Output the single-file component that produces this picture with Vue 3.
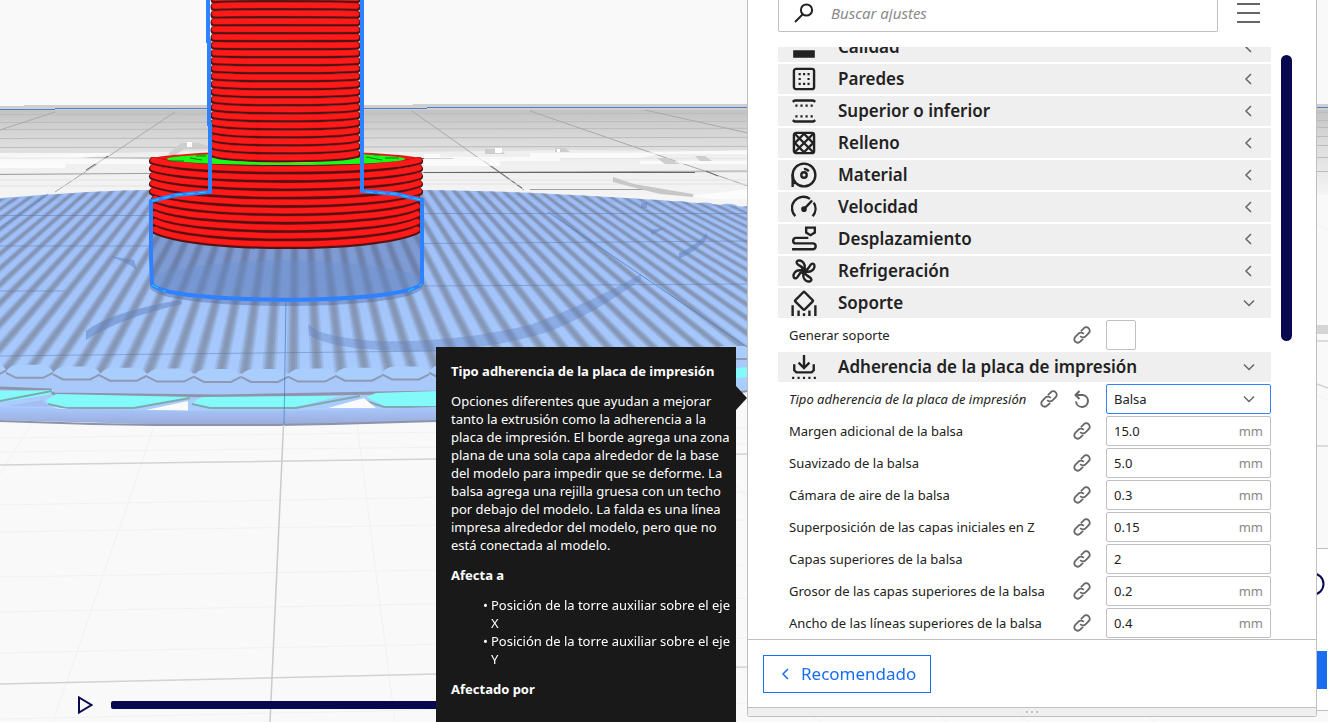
<script setup>
import { ref } from 'vue'

const vp = { x: 298, y: 5 }

const wedge = (offset, half) => {
  const depth = 400
  const f = (depth - vp.y) / (370 - vp.y)
  const l = vp.x + (offset - half) * f
  const r = vp.x + (offset + half) * f
  return `${vp.x},${vp.y} ${l.toFixed(1)},${depth} ${r.toFixed(1)},${depth}`
}
const wedges = []
for (let k = -70; k <= 70; k++) {
  for (const half of [7, 5, 4, 2]) wedges.push(wedge(k * 24 - 5, half))
}

const topEdge = (x) => 188 + Math.pow(Math.abs(x - 286) / 461, 1.7) * (x > 286 ? 17 : 24)
const farCaps = []
for (let x = -4; x < 760; x += 24) farCaps.push({ x: x + 12, y: topEdge(x + 12) + 3 })
const capY = (x) => 375 - Math.pow((x - 240) / 460, 2) * 20
const caps = []
for (let x = -41; x < 760; x += 47) caps.push({ x, y: capY(x + 23) })

const ring = (cx, hw, y, sag) =>
  `M${cx - hw} ${y}C${cx - hw * 0.7} ${y + sag * 1.33} ${cx + hw * 0.7} ${y + sag * 1.33} ${cx + hw} ${y}`
const columnRings = []
for (let j = -1; j < 20; j++) {
  const y = 7 + 7.75 * j
  columnRings.push(ring(285.5, 71, y, Math.max(-1, (y - 30) * 0.034)))
}
const baseRings = []
for (let k = 0; k < 10; k++) {
  baseRings.push(ring(286, k > 4 ? 131 : 133, 161 + 7.7 * k, 9 + k * 0.65))
}

const farLines = [113, 121, 128, 137, 146, 158, 172]
const floorLines = [
  [436, 'M0 438L748 428'], [452, 'M0 452L748 444'], [500, 'M0 505L748 492'], [530, 'M0 532L748 520'],
  [575, 'M0 577L748 565'], [612, 'M0 612L748 598'], [650, 'M0 653L748 638'], [715, 'M0 719L748 703'],
]
const radial = [-460, -340, -230, -120, 60, 130, 240, 350, 460, 580]

const categories = [
  { name: 'Calidad', icon: 'quality' },
  { name: 'Paredes', icon: 'walls' },
  { name: 'Superior o inferior', icon: 'topbottom' },
  { name: 'Relleno', icon: 'infill' },
  { name: 'Material', icon: 'material' },
  { name: 'Velocidad', icon: 'speed' },
  { name: 'Desplazamiento', icon: 'travel' },
  { name: 'Refrigeración', icon: 'cooling' },
  { name: 'Soporte', icon: 'support', open: true },
]
const infillDiagonals = 'M3 3L21 21M3 21L21 3M11.500 3L21 12.500M3 11.500L12.500 21M12.500 3L3 12.500M21 11.500L11.500 21'
const fields = ref([
  { id: 'margin', label: 'Margen adicional de la balsa', value: '15.0', unit: 'mm' },
  { id: 'smoothing', label: 'Suavizado de la balsa', value: '5.0', unit: 'mm' },
  { id: 'airgap', label: 'Cámara de aire de la balsa', value: '0.3', unit: 'mm' },
  { id: 'overlap', label: 'Superposición de las capas iniciales en Z', value: '0.15', unit: 'mm' },
  { id: 'layers', label: 'Capas superiores de la balsa', value: '2', unit: '' },
  { id: 'thickness', label: 'Grosor de las capas superiores de la balsa', value: '0.2', unit: 'mm' },
  { id: 'width', label: 'Ancho de las líneas superiores de la balsa', value: '0.4', unit: 'mm' },
])
const support = ref(false)
const adhesion = ref('Balsa')
const search = ref('')
</script>

<template>
  <main class="workspace">
    <svg class="scene" viewBox="0 0 1328 722" preserveAspectRatio="xMinYMin slice" aria-hidden="true">
      <defs>
        <linearGradient id="plate" x1="0" y1="0" x2="0" y2="1">
          <stop offset="0" stop-color="#c3c3c3" />
          <stop offset=".35" stop-color="#dadada" />
          <stop offset="1" stop-color="#f4f4f4" />
        </linearGradient>
        <linearGradient id="raft" x1="0" y1="0" x2="0" y2="1">
          <stop offset="0" stop-color="#9dbcf6" />
          <stop offset="1" stop-color="#abceff" />
        </linearGradient>
        <linearGradient id="tube" x1="0" y1="0" x2="0" y2="1">
          <stop offset="0" stop-color="#a9d0fd" />
          <stop offset=".6" stop-color="#a9c9ff" />
          <stop offset="1" stop-color="#9aabda" />
        </linearGradient>
        <clipPath id="raftClip">
          <path d="M0 199Q100 190 150 190H422Q560 191 748 207V358Q600 367 436 371Q200 376 0 371Z" />
        </clipPath>
      </defs>
      <rect width="1328" height="722" fill="#f9f9f9" />
      <path d="M0 106H24V105H413V104H1328V110H0Z" fill="#cfcfcf" />
      <rect y="110" width="1328" height="85" fill="url(#plate)" />
      <g stroke="#bcbcbc" stroke-width="1">
        <path v-for="y in farLines" :key="y" :d="`M0 ${y + 1}.5L1328 ${y - 1}.5`" />
      </g>
      <path d="M0 109.500H55M55 108.500H427M427 107.500H612M612 107.500H1328" stroke="#4f80cc" stroke-width="1" fill="none" />
      <path d="M0 157L110 153L208 151L410 152L560 150L748 151V212H0Z" fill="#f3f3f3" opacity=".75" />
      <g fill="none" stroke="#aaa" stroke-width="1">
        <path d="M55 112L0 130M175 112L55 192M412 111L524 190M530 111L748 186M645 110L748 133" />
        <path d="M0 158H208M420 158.500H453M0 174.500L208 173M420 172.500L748 171M530 189.500H644" stroke="#a0a0a0" />
        <path d="M86 170L108 156M484 161L522 188M706 171L718 176M420 158.500H453M424 172.500H695" stroke="#666" />
        <path d="M0 180H208M0 186H208M424 180H748M424 184H748" stroke="#e2e2e2" />
      </g>
      <path d="M0 153H110V155L82 158L208 160V164H66V167H0ZM0 165H65V168H0ZM424 154H440V157H530V153H620L748 150V154H660L640 158H560V161H500V166H424ZM640 161H748V164H640ZM690 196L748 189V199H710Z" fill="#fff" opacity=".7" />
      <path d="M168 154L181 143H199L208 146V149H184L174 156ZM485 149H500L505 154H485ZM555 148H565L570 152H555ZM657 158L668 158L680 164H665ZM695 156H705L712 161H700Z" fill="#cdcdcd" />
      <path d="M187 142H192V147H187ZM495 148H502V153H495ZM557 149H560V152H557Z" fill="#fff" />
      <path d="M613 177L634 184L663 189L693 194V197L660 194L632 187L613 182Z" fill="#c7c7c7" />
      <g fill="none" stroke="#f1f1f1">
        <path v-for="l in floorLines" :key="l[0]" :d="l[1]" />
        <path v-for="r in radial" :key="r" :d="`M${290 + r * 1.1} 415L${281 + r * 1.9} 722`" />
        <path d="M748 130L1328 400M748 300L1328 600M1000 60L1328 230M820 722L700 640M1028 722L940 670" />
      </g>
      <path d="M0 465L436 459L748 454M0 684L436 674L748 667M1317 341H1328M1317 446H1328M1317 384L1328 388" fill="none" stroke="#d2d2d2" stroke-width="1.500" />
      <path d="M1317 325H1328V334H1317Z" fill="#d5d5d5" />

      <path d="M0 198Q100 190 150 190H422Q560 191 748 207V391Q600 411 436 421Q280 427 150 424L0 420Z" fill="url(#raft)" />
      <ellipse v-for="c in farCaps" :key="c.x" :cx="c.x" :cy="c.y" rx="10" ry="3" fill="#98b8f0" />
      <g clip-path="url(#raftClip)">
        <polygon v-for="(w, i) in wedges" :key="i" :points="w" fill="#66666c" fill-opacity=".15" />
      </g>
      <path d="M0 377Q200 384 436 378Q600 371 748 362V385Q600 398 436 400H0Z" fill="#a9c9fb" />
      <g v-for="c in caps" :key="c.x">
        <path :d="`M${c.x} ${c.y + 1}Q${c.x + 3} ${c.y - 5} ${c.x + 12} ${c.y - 6}H${c.x + 36}Q${c.x + 44} ${c.y - 5} ${c.x + 47} ${c.y + 1}L${c.x + 36} ${c.y + 6}H${c.x + 12}Z`" fill="#a9cdfd" />
        <path :d="`M${c.x} ${c.y + 2}L${c.x + 10} ${c.y + 7}H${c.x + 37}L${c.x + 47} ${c.y + 2}`" fill="none" stroke="#8f99b3" stroke-width="2" />
      </g>
      <path d="M0 388L50 390L54 394L220 396L436 392L748 371" fill="none" stroke="#8d95ab" stroke-width="3" />
      <path d="M0 391L55 390L48 395L16 400L0 402ZM46 400L56 394L192 397L154 404L134 409H66L48 404ZM196 400L202 397L340 396L300 406L290 408H210L192 405ZM366 397L376 393L436 391V406H384ZM748 367V377L700 383V371Z" fill="#83faf9" />
      <path d="M48 404L66 408H134L190 398M192 404L210 408H296L360 396M366 401L384 407H436M0 401L52 391" fill="none" stroke="#7fa9b0" stroke-width="2" />
      <path d="M52 407L60 409H68ZM146 410L188 401V411ZM328 408L364 398L376 408Z" fill="#fafafa" />
      <path d="M8 406L42 400L50 407Z" fill="#a6bdf1" />
      <path d="M0 407Q60 409 140 410Q300 412 436 407Q620 400 748 377V391Q620 411 436 421Q280 427 150 424L0 420Z" fill="url(#tube)" />
      <path d="M0 421L30 422L92 424L155 425H278L332 424L436 421Q620 411 748 391" fill="none" stroke="#8d94a8" stroke-width="2" />

      <g fill="none" stroke="#53719f" stroke-width="1" opacity=".6">
        <path d="M0 215.500H150M0 246H150M0 291H65M0 356L436 351M424 213.500H748M424 243.500L748 241M424 286L748 284" opacity=".7" />
        <path d="M286 300L284 424M548 212L747 347" stroke="#356db8" />
        <path d="M48 194L0 228" stroke="#5281d2" />
      </g>
      <path d="M283.500 425L270 722" stroke="#cbcbcb" stroke-width="1.500" />
      <g fill="#5d7ebb" opacity=".5">
        <path d="M86 331Q110 312 180 300L182 304Q120 318 86 340Z" />
        <path d="M308 324L317 331Q360 345 430 340Q480 337 530 325Q590 303 641 274V280Q590 316 548 332Q480 353 400 351Q330 349 309 335Z" opacity=".75" />
        <path d="M679 253Q695 246 707 233V239Q695 252 679 259ZM641 203H647V208H641ZM650 230L665 228L652 235ZM110 256L134 260L137 270L130 265Z" />
      </g>

      <path d="M150 202H422V288C410 312 162 312 150 288Z" fill="#4c629a" opacity=".4" />
      <path d="M150 275Q286 245 422 275V285C410 307 162 307 150 285Z" fill="#6b8fcf" opacity=".35" />
      <path d="M150 202L209 192H362L422 202V230H150Z" fill="#701010" />
      <ellipse cx="286" cy="160" rx="136" ry="9" fill="#e81717" />
      <path v-for="(d, i) in baseRings" :key="'b' + i" :d="d" fill="#551111" stroke="#4c1414" stroke-width="8" stroke-linecap="round" />
      <g fill="none" stroke-linecap="round" transform="translate(0 -1)">
        <path v-for="(d, i) in baseRings" :key="'m' + i" :d="d" stroke="#c01414" stroke-width="6" />
        <path v-for="(d, i) in baseRings" :key="'r' + i" :d="d" stroke="#ff1a1a" stroke-width="5" />
      </g>
      <ellipse cx="286" cy="159" rx="119" ry="6" fill="#18fb18" />
      <path d="M169 161H184M190 158L202 160M196 156H206M366 157L382 160M385 158H399M374 155H380" stroke="#087f10" stroke-width="1" />
      <path d="M212 157Q285 167 359 157" fill="none" stroke="#ffe51a" stroke-width="2" />
      <rect x="211" width="149" height="156" fill="#c8c8c8" />
      <path v-for="(d, i) in columnRings" :key="'c' + i" :d="d" fill="none" stroke="#4c1414" stroke-width="8" stroke-linecap="round" />
      <g fill="none" stroke-linecap="round" transform="translate(0 -1)">
        <path v-for="(d, i) in columnRings" :key="'d' + i" :d="d" stroke="#c01414" stroke-width="6" />
        <path v-for="(d, i) in columnRings" :key="'e' + i" :d="d" stroke="#ff1a1a" stroke-width="5" />
      </g>
      <g fill="none" stroke="#2f82ff" stroke-width="4">
        <path d="M208 0V41H209V124H210V192L176 195L151 201V259L152 284C163 305 410 305 422 283V200L396 194L362 191V0" />
        <path d="M152 201L176 195L206 192M366 192L396 194L421 200M152 285L166 292M408 291L422 284" stroke="#19d5ff" stroke-width="1" stroke-dasharray="7 5" />
      </g>
    </svg>

    <section class="stage" aria-label="Vista previa">
      <div class="timeline">
        <button class="play" aria-label="Reproducir">
          <svg width="16" height="20" viewBox="0 0 16 20"><path d="M2 2.500V17.500L14.500 10Z" fill="none" stroke="#08084e" stroke-width="2" /></svg>
        </button>
        <div class="track"></div>
      </div>
    </section>

    <aside class="panel">
      <div class="top">
        <label class="search">
          <svg width="22" height="22" viewBox="0 0 22 22"><g fill="none" stroke="#222" stroke-width="2"><circle cx="13.500" cy="8" r="5.600" /><path d="M9.500 12.500L2 20" /></g></svg>
          <input v-model="search" type="text" placeholder="Buscar ajustes" aria-label="Buscar ajustes" />
        </label>
        <button class="menu" aria-label="Visibilidad de los ajustes"><i></i><i></i><i></i></button>
      </div>

      <div class="body">
        <div class="list">
          <div class="inner">
            <button v-for="c in categories" :key="c.name" class="cat">
              <svg class="icon" width="26" height="26" viewBox="0 0 24 24" fill="none" stroke="#222" stroke-width="2.200">
                <path v-if="c.icon === 'quality'" d="M2 2H22V4H2ZM2 8H22V11H2ZM2 15H22V22H2Z" fill="#222" stroke="none" />
                <g v-else-if="c.icon === 'walls'">
                  <rect x="2.700" y="2.700" width="18.600" height="18.600" rx="2" />
                  <path d="M7 7.500H17.200M7 16.500H17.200" stroke-width="2" stroke-dasharray="2 2.100" /><path d="M7 12H9M15.200 12H17.200" stroke-width="2" />
                </g>
                <g v-else-if="c.icon === 'topbottom'">
                  <path d="M1.500 3.500L3.500 2.300H20.500L22.500 3.500M1.500 20.500L3.500 21.700H20.500L22.500 20.500" />
                  <path d="M4 7H20.500M4 17H20.500" stroke-width="2" stroke-dasharray="2 2.700" />
                </g>
                <g v-else-if="c.icon === 'infill'">
                  <rect x="2.700" y="2.700" width="18.600" height="18.600" rx="2" /><path :d="infillDiagonals" />
                </g>
                <g v-else-if="c.icon === 'material'">
                  <circle cx="12" cy="12" r="10.500" /><path d="M1.500 11V23M1.500 17L4 20" /><circle cx="12" cy="12" r="2.500" />
                  <path d="M12 6.500Q14 6 16.500 8.500" />
                </g>
                <g v-else-if="c.icon === 'speed'">
                  <path d="M4 20.500A10.500 10.500 0 0 1 17.500 4.500M21 8A10.500 10.500 0 0 1 20 20.500M12 14L19.500 6" />
                  <circle cx="12" cy="14" r="1.500" fill="#222" />
                </g>
                <g v-else-if="c.icon === 'travel'">
                  <path d="M14 1.500H22V6L18 8.500L14 6ZM16 11H4.500A2.500 2.500 0 0 0 4.500 16H20.500A2.800 2.800 0 0 1 20.500 21.500H1" />
                </g>
                <g v-else-if="c.icon === 'cooling'">
                  <g v-for="a in [0, 90, 180, 270]" :key="a" :transform="`rotate(${a} 12 12)`">
                    <path d="M12 12C12 8 8 8 5.500 5C4 2.500 8 1.500 10 3C13 5 13 9 12 12Z" />
                  </g>
                  <circle cx="12" cy="12" r="2" fill="#222" />
                </g>
                <g v-else>
                  <rect x="5.900" y="3.900" width="12.200" height="12.200" rx="1" transform="rotate(45 12 10)" />
                  <path d="M1.500 14V24M22.500 14V24M7 19V24M17 19V24M12 21.500V24" />
                </g>
              </svg>
              <span>{{ c.name }}</span>
              <svg class="chev" width="14" height="14" viewBox="0 0 14 14"><path :d="c.open ? 'M2 4.500L7 9.500L12 4.500' : 'M9 2L4 7L9 12'" /></svg>
            </button>

            <div class="row">
              <label for="support">Generar soporte</label>
              <svg class="link" width="18" height="18"><use href="#link" /></svg>
              <div class="control"><input id="support" v-model="support" type="checkbox" /></div>
            </div>

            <button class="cat">
              <svg class="icon" width="26" height="26" viewBox="0 0 24 24" fill="none" stroke="#222" stroke-width="2.200">
                <path d="M12 1V12M7 8L12 13L17 8M3 9.500V15L5 17H19L21 15V9.500" /><path d="M1 22H23" stroke-width="2" stroke-dasharray="2 3" />
              </svg>
              <span>Adherencia de la placa de impresión</span>
              <svg class="chev" width="14" height="14" viewBox="0 0 14 14"><path d="M2 4.500L7 9.500L12 4.500" /></svg>
            </button>

            <div class="row changed">
              <label for="adhesion">Tipo adherencia de la placa de impresión</label>
              <svg class="link" width="18" height="18"><use href="#link" /></svg>
              <button class="reset" aria-label="Restablecer">
                <svg width="18" height="18" viewBox="0 0 18 18" fill="none" stroke="#666" stroke-width="2"><path d="M2.500 5H10A6 6 0 1 1 3 11.500M6.500 1L2.500 5L6.500 9" /></svg>
              </button>
              <div class="control field focus">
                <select id="adhesion" v-model="adhesion"><option>Balsa</option><option>Falda</option><option>Borde</option></select>
                <svg class="chev over" width="14" height="14" viewBox="0 0 14 14"><path d="M2 4.500L7 9.500L12 4.500" /></svg>
              </div>
            </div>

            <div v-for="f in fields" :key="f.id" class="row">
              <label :for="f.id">{{ f.label }}</label>
              <svg class="link" width="18" height="18"><use href="#link" /></svg>
              <div class="control field">
                <input :id="f.id" v-model="f.value" type="text" />
                <span class="unit">{{ f.unit }}</span>
              </div>
            </div>
          </div>
        </div>
        <div class="scroll"><div class="thumb"></div></div>
      </div>

      <footer class="foot">
        <button class="mode">
          <svg width="14" height="14" viewBox="0 0 14 14"><path d="M9 2L4 7L9 12" /></svg>Recomendado
        </button>
      </footer>
      <div class="grip"><i></i><i></i><i></i></div>

      <div class="tooltip" role="tooltip">
        <h3>Tipo adherencia de la placa de impresión</h3>
        <p>Opciones diferentes que ayudan a mejorar tanto la extrusión como la adherencia a la placa de impresión. El borde agrega una zona plana de una sola capa alrededor de la base del modelo para impedir que se deforme. La balsa agrega una rejilla gruesa con un techo por debajo del modelo. La falda es una línea impresa alrededor del modelo, pero que no está conectada al modelo.</p>
        <h3>Afecta a</h3>
        <ul>
          <li>Posición de la torre auxiliar sobre el eje X</li>
          <li>Posición de la torre auxiliar sobre el eje Y</li>
        </ul>
        <h3>Afectado por</h3>
      </div>
    </aside>

    <div class="action">
      <svg class="info" width="24" height="24" viewBox="0 0 24 24"><circle cx="12" cy="12" r="10.500" fill="none" stroke="#08084e" stroke-width="2" /></svg>
      <button class="slice" aria-label="Guardar"></button>
    </div>

    <svg width="0" height="0" class="defs" aria-hidden="true">
      <symbol id="link" viewBox="0 0 18 18">
        <g fill="none" stroke="#666" stroke-width="1.800" transform="rotate(-45 9 9)">
          <path d="M7 12.500H3A3.500 3.500 0 0 1 3 5.500H7.500A3.500 3.500 0 0 1 11 9.500" />
          <path d="M11 5.500H15A3.500 3.500 0 0 1 15 12.500H10.500A3.500 3.500 0 0 1 7 8.500" />
        </g>
      </symbol>
    </svg>
  </main>
</template>

<style>
body { margin: 0; overflow: hidden; }
</style>

<style scoped>
* { box-sizing: border-box; }
.workspace {
  position: relative;
  display: flex;
  height: 100vh;
  overflow: hidden;
  padding-right: 11px;
  font-family: "Noto Sans", sans-serif;
  font-size: 13px;
  line-height: 18px;
  color: #222;
}
.scene { position: absolute; inset: 0; width: 100%; height: 100%; }
button { font: inherit; color: inherit; border: 0; padding: 0; background: none; cursor: pointer; }
input, select { font: inherit; color: inherit; min-width: 0; }
.stage { position: relative; flex: 1; min-width: 0; display: flex; align-items: flex-end; }
.timeline { flex: 1; display: flex; align-items: center; gap: 18px; padding: 0 200px 7px 77px; }
.play { display: flex; }
.track { flex: 1; height: 8px; border-radius: 2px; background: #08084e; }
.panel {
  position: relative;
  z-index: 2;
  width: 570px;
  margin-bottom: 5px;
  display: flex;
  flex-direction: column;
  background: #fff;
  border: 1px solid #c0c0c0;
  border-top: 0;
  border-radius: 0 0 3px 3px;
}
.top { display: flex; gap: 19px; padding: 0 56px 0 30px; height: 47px; }
.search {
  flex: 1;
  height: 32px;
  display: flex;
  align-items: center;
  gap: 16px;
  padding: 0 14px 6px;
  border: 1px solid #c0c0c0;
  border-top: 0;
  border-radius: 0 0 2px 2px;
}
.search input { flex: 1; border: 0; outline: 0; padding: 0; font-size: 15px; background: none; }
.search input::placeholder { color: #8a8a8a; font-style: italic; opacity: 1; }
.menu { width: 23px; height: 27px; display: flex; flex-direction: column; justify-content: space-between; padding: 3px 0 4px; }
.menu i { height: 2px; background: #666; }
.body { flex: 1; min-height: 0; display: flex; gap: 10px; padding: 0 24px 0 30px; }
.list { flex: 1; overflow: hidden; }
.inner { margin-top: -15px; display: flex; flex-direction: column; gap: 2px; }
.cat {
  display: flex;
  align-items: center;
  height: 30px;
  padding: 0 15px 0 13px;
  gap: 21px;
  background: #efefef;
  font-size: 17px;
  font-weight: 600;
  text-align: left;
}
.cat span { flex: 1; }
.chev { flex: none; }
.chev path, .mode path { fill: none; stroke: #666; stroke-width: 1.5; }
.row { display: flex; align-items: center; gap: 15px; height: 30px; padding-left: 11px; }
.row label { flex: 1; min-width: 0; white-space: nowrap; }
.changed label { font-style: italic; }
.link, .reset { flex: none; display: block; width: 18px; height: 18px; }
.control { width: 165px; height: 30px; flex: none; }
.field { position: relative; display: flex; align-items: center; border: 1px solid #c0c0c0; border-radius: 2px; padding: 0 7px; }
.field input, .field select { flex: 1; width: 0; border: 0; outline: 0; padding: 0; background: none; appearance: none; }
.focus { border-color: #3282ff; }
.over { position: absolute; right: 14px; pointer-events: none; }
.unit { color: #888; }
input[type="checkbox"] { appearance: none; display: block; width: 30px; height: 30px; margin: 0; border: 1px solid #c0c0c0; border-radius: 2px; background: #fff; }
.scroll { width: 11px; padding-top: 8px; }
.thumb { height: 49%; border-radius: 6px; background: #08084e; }
.foot { border-top: 1px solid #c0c0c0; padding: 15px; height: 68px; }
.mode {
  display: flex;
  align-items: center;
  gap: 8px;
  height: 38px;
  padding: 0 14px 0 15px;
  border: 1px solid #196ef0;
  color: #196ef0;
  font-size: 17px;
}
.mode path { stroke: #196ef0; }
.grip { height: 9px; border-top: 1px solid #c0c0c0; background: #efefef; display: flex; align-items: center; justify-content: center; gap: 3px; }
.grip i { width: 2px; height: 2px; background: #c4c4c4; }
.tooltip {
  position: absolute;
  top: 347px;
  right: 580px;
  width: 300px;
  min-height: 380px;
  padding: 15px 5px 15px 15px;
  background: #191919;
  color: #fff;
}
.tooltip::after {
  content: "";
  position: absolute;
  left: 100%;
  top: 39px;
  border: 12px solid transparent;
  border-left: 11px solid #191919;
  border-right: 0;
}
.tooltip h3, .tooltip p, .tooltip ul { margin: 0 0 12px; font-size: 13px; }
.tooltip ul { list-style: none; padding-left: 40px; }
.tooltip li { position: relative; }
.tooltip li::before { content: "•"; position: absolute; left: -8px; }
.action {
  position: absolute;
  right: 0;
  bottom: 11px;
  width: 60px;
  height: 163px;
  background: #fff;
  border: 1px solid #c0c0c0;
  border-right: 0;
}
.info { position: absolute; right: 3px; top: 23px; }
.slice { position: absolute; right: 1px; bottom: 21px; width: 50px; height: 38px; background: #196ef0; }
.defs { position: absolute; }
</style>
